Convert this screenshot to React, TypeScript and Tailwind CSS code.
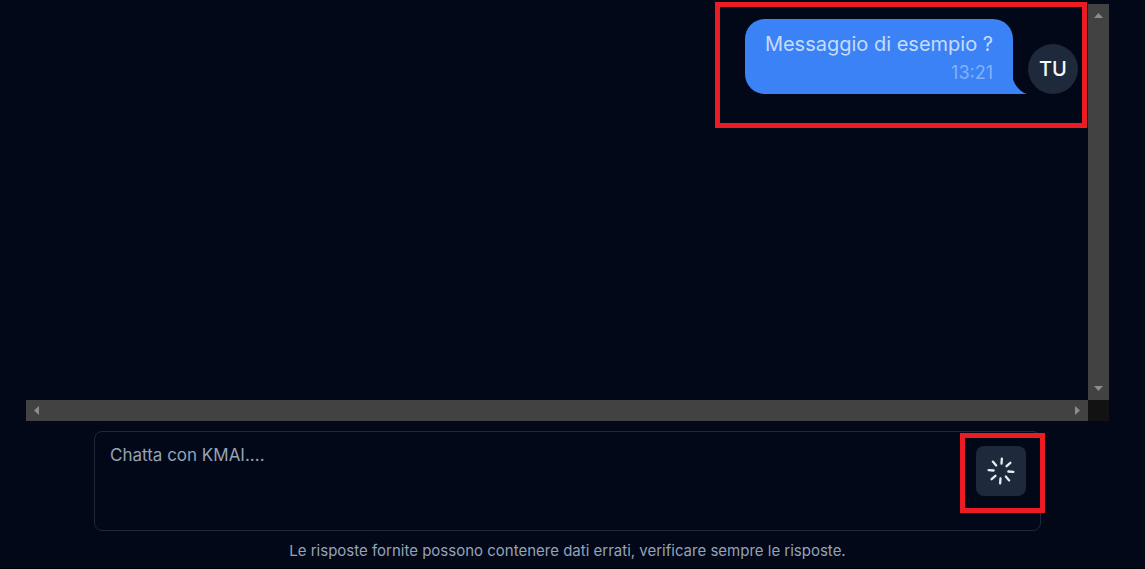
import type { ReactNode } from "react";

type Direction = "up" | "down" | "left" | "right";

const arrows: Record<Direction, string> = {
  up: "M0 5 L4.5 0 L9 5 Z",
  down: "M0 0 L9 0 L4.5 5 Z",
  left: "M5 0 L5 9 L0 4.5 Z",
  right: "M0 0 L5 4.5 L0 9 Z",
};

const labels: Record<Direction, string> = {
  up: "Scorri in alto",
  down: "Scorri in basso",
  left: "Scorri a sinistra",
  right: "Scorri a destra",
};

function ScrollButton({ direction }: { direction: Direction }) {
  const vertical = direction === "up" || direction === "down";
  return (
    <button type="button" aria-label={labels[direction]} className="flex size-[21px] items-center justify-center">
      <svg width={vertical ? 9 : 5} height={vertical ? 5 : 9} className="fill-[#8c8c8c]" aria-hidden="true">
        <path d={arrows[direction]} />
      </svg>
    </button>
  );
}

function Highlight({ children, className }: { children: ReactNode; className: string }) {
  return <div className={`border-5 border-[#ed1c24] ${className}`}>{children}</div>;
}

function Message({ text, time, author }: { text: string; time: string; author: string }) {
  return (
    <div className="flex items-end gap-[15px]">
      <div className="relative rounded-[20px] rounded-br-none bg-[#3b82f6] px-5 pt-2.5 pb-2">
        <p className="text-xl leading-[30px] text-slate-50/75">{text}</p>
        <p className="text-right text-lg leading-[27px] text-slate-50/40">{time}</p>
        <svg className="absolute bottom-0 left-full" width="15" height="15" viewBox="0 0 15 15" aria-hidden="true">
          <path d="M0 0 C1 5 7 13 14 15 H0 Z" fill="#3b82f6" />
        </svg>
      </div>
      <div className="flex size-[50px] items-center justify-center rounded-full bg-[#1e293b] text-xl font-medium text-slate-50">
        {author}
      </div>
    </div>
  );
}

function Spinner() {
  return (
    <svg width="30" height="30" viewBox="0 0 30 30" fill="none" stroke="#e8edf3" strokeWidth="2.3" strokeLinecap="round" aria-hidden="true">
      <g transform="rotate(4 15 15)">
        <path d="M15 2.6V7.6M15 22.4V27.4M2.6 15H7.6M22.4 15H27.4M6.2 6.2L9.8 9.8M20.2 20.2L23.8 23.8M6.2 23.8L9.8 20.2M20.2 9.8L23.8 6.2" />
      </g>
    </svg>
  );
}

export default function App() {
  return (
    <main className="flex h-screen flex-col border-b border-black bg-[#020817] pr-9 pl-[26px] font-['Inter',sans-serif]">
      <section className="mt-1 grid min-h-0 flex-1 grid-cols-[1fr_21px] grid-rows-[1fr_21px]">
        <div className="flex items-start justify-end">
          <Highlight className="-mt-0.5 mr-px pt-3 pr-1 pb-[29px] pl-[25px]">
            <Message text="Messaggio di esempio ?" time="13:21" author="TU" />
          </Highlight>
        </div>
        <div className="flex flex-col justify-between bg-[#424242] py-px">
          <ScrollButton direction="up" />
          <ScrollButton direction="down" />
        </div>
        <div className="flex justify-between bg-[#424242]">
          <ScrollButton direction="left" />
          <ScrollButton direction="right" />
        </div>
        <div className="bg-[#121212]" />
      </section>

      <form className="mt-2.5 px-17">
        <div className="relative">
          <textarea
            aria-label="Messaggio"
            placeholder="Chatta con KMAI...."
            className="block h-[100px] w-full resize-none rounded-lg border border-[#1e293b] bg-transparent py-2 pr-24 pl-[15px] text-[17px] leading-[30px] text-slate-50 outline-none placeholder:text-[#94a3b8]"
          />
          <Highlight className="absolute top-0.5 -right-1 pt-2 pr-3.5 pb-3 pl-[11px]">
            <button type="submit" aria-label="Invia" className="flex size-[50px] items-center justify-center rounded-lg bg-[#1e293b]">
              <Spinner />
            </button>
          </Highlight>
        </div>
        <p className="mt-2 mb-[5px] text-center text-[15px] leading-6 text-[#94a3b8]">
          Le risposte fornite possono contenere dati errati, verificare sempre le risposte.
        </p>
      </form>
    </main>
  );
}
